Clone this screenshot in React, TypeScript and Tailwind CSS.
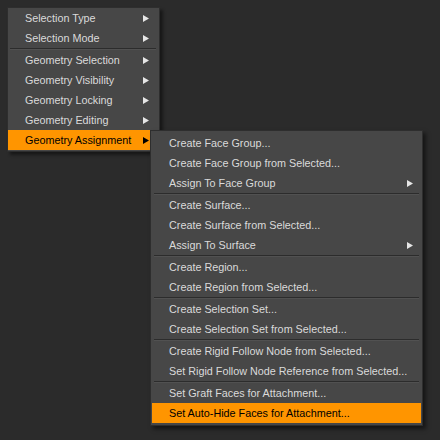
type Entry = { label: string; sub?: boolean; active?: boolean } | "sep";

const mainMenu: Entry[] = [
  { label: "Selection Type", sub: true },
  { label: "Selection Mode", sub: true },
  "sep",
  { label: "Geometry Selection", sub: true },
  { label: "Geometry Visibility", sub: true },
  { label: "Geometry Locking", sub: true },
  { label: "Geometry Editing", sub: true },
  { label: "Geometry Assignment", sub: true, active: true },
];

const assignMenu: Entry[] = [
  { label: "Create Face Group..." },
  { label: "Create Face Group from Selected..." },
  { label: "Assign To Face Group", sub: true },
  "sep",
  { label: "Create Surface..." },
  { label: "Create Surface from Selected..." },
  { label: "Assign To Surface", sub: true },
  "sep",
  { label: "Create Region..." },
  { label: "Create Region from Selected..." },
  "sep",
  { label: "Create Selection Set..." },
  { label: "Create Selection Set from Selected..." },
  "sep",
  { label: "Create Rigid Follow Node from Selected..." },
  { label: "Set Rigid Follow Node Reference from Selected..." },
  "sep",
  { label: "Set Graft Faces for Attachment..." },
  { label: "Set Auto-Hide Faces for Attachment...", active: true },
];

function Arrow({ dark }: { dark?: boolean }) {
  return (
    <svg width="6" height="7" viewBox="0 0 6 7" className="shrink-0">
      <polygon points="0,0 6,3.5 0,7" fill={dark ? "#000000" : "#e6e6e6"} />
    </svg>
  );
}

function Menu({ items, arrowPad }: { items: Entry[]; arrowPad: string }) {
  return (
    <>
      {items.map((item, i) =>
        item === "sep" ? (
          <div key={i} className="mx-[2px] my-0 h-[2px] border-t border-[#2c2c2c] border-b border-b-[#515151]" />
        ) : (
          <div
            key={i}
            className={
              "flex h-[20px] items-center pl-[17px] " +
              arrowPad +
              (item.active ? " bg-[#ff9500] text-black" : " text-[#dadada]")
            }
          >
            <span className="whitespace-nowrap">{item.label}</span>
            {item.sub ? (
              <span className="ml-auto">
                <Arrow dark={item.active} />
              </span>
            ) : null}
          </div>
        )
      )}
    </>
  );
}

export default function App() {
  return (
    <div
      className="relative h-[440px] w-[440px] overflow-hidden bg-[#2b2b2b] text-[10.8px] leading-none"
      style={{ fontFamily: '"Liberation Sans", Arial, sans-serif' }}
    >
      <div className="absolute left-[7px] top-[7px] w-[153px] border border-[#2e2e2e] bg-[#474747] py-0 pl-0 pr-[1px] shadow-[3px_3px_3px_rgba(0,0,0,0.45)]">
        <Menu items={mainMenu} arrowPad="pr-[9px]" />
        <div className="h-[1px]" />
      </div>
      <div className="absolute left-[150px] top-[130px] w-[273px] border border-[#2e2e2e] bg-[#474747] px-[1px] py-[2px] shadow-[3px_3px_4px_rgba(0,0,0,0.5)]">
        <Menu items={assignMenu} arrowPad="pr-[8px]" />
      </div>
    </div>
  );
}
